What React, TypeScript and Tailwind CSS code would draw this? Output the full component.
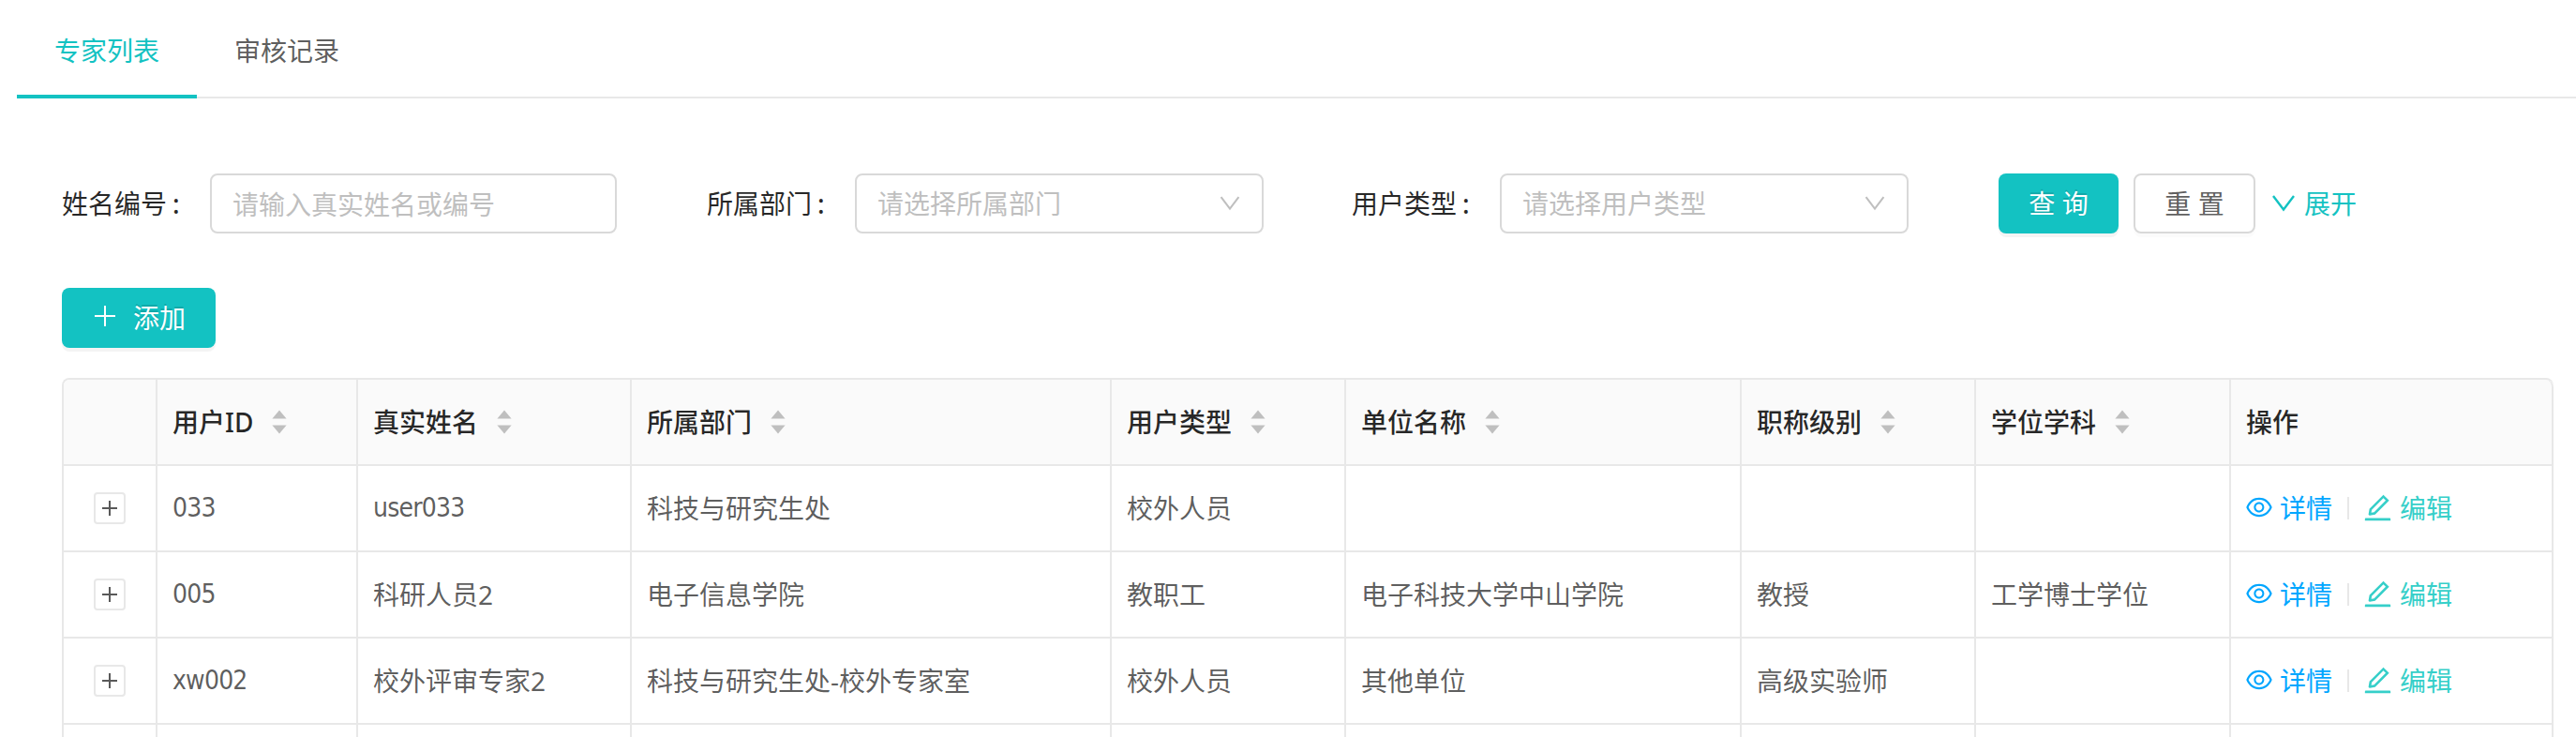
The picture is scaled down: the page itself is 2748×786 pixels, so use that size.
import React from 'react';
import { AiOutlineEdit, AiOutlineEye } from 'react-icons/ai';

interface Expert {
  id: string;
  name: string;
  department: string;
  userType: string;
  unit: string;
  title: string;
  degree: string;
}

const experts: Expert[] = [
  { id: '033', name: 'user033', department: '科技与研究生处', userType: '校外人员', unit: '', title: '', degree: '' },
  { id: '005', name: '科研人员2', department: '电子信息学院', userType: '教职工', unit: '电子科技大学中山学院', title: '教授', degree: '工学博士学位' },
  { id: 'xw002', name: '校外评审专家2', department: '科技与研究生处-校外专家室', userType: '校外人员', unit: '其他单位', title: '高级实验师', degree: '' },
];

const columns: { key: keyof Expert; label: string }[] = [
  { key: 'id', label: '用户ID' },
  { key: 'name', label: '真实姓名' },
  { key: 'department', label: '所属部门' },
  { key: 'userType', label: '用户类型' },
  { key: 'unit', label: '单位名称' },
  { key: 'title', label: '职称级别' },
  { key: 'degree', label: '学位学科' },
];

const gridCols = 'grid grid-cols-[100px_214px_292px_512px_250px_422px_250px_272px_344px]';
const cell = 'flex items-center border-r-2 border-b-2 border-[#e8e8e8] px-4';

// Latin-only values are set a little tighter than the Chinese ones
const latinOnly = /^[\w-]+$/;

const Sorter: React.FC = () => (
  <svg className="ml-5 h-[26px] w-4" viewBox="0 0 16 26" fill="#bfbfbf">
    <path d="M8 0.5L15.6 9.5H0.4z" />
    <path d="M8 25.5L0.4 16.5h15.2z" />
  </svg>
);

const ChevronDown: React.FC<{ className: string }> = ({ className }) => (
  <svg className={className} viewBox="0 0 28 28" fill="none" stroke="currentColor" strokeWidth={2.4}>
    <path d="M3 6L14 20.5L25 6" />
  </svg>
);

const Field: React.FC<{ label: string; children: React.ReactNode }> = ({ label, children }) => (
  <div className="flex w-[688px] items-center">
    <label className="w-[158px] text-black/85">
      {label}
      <span className="ml-1.5 font-medium">:</span>
    </label>
    {children}
  </div>
);

const SelectBox: React.FC<{ placeholder: string }> = ({ placeholder }) => (
  <div className="flex h-16 w-[436px] items-center justify-between rounded-lg border-2 border-[#d9d9d9] px-[22px] text-[#bfbfbf]">
    <span>{placeholder}</span>
    <ChevronDown className="h-6 w-6" />
  </div>
);

const ExpertTable: React.FC = () => (
  <div className="w-[2658px] rounded-t-lg border-t-2 border-l-2 border-[#e8e8e8]">
    {/* Header */}
    <div className={`${gridCols} h-[92px] font-medium text-black/85`}>
      <div className={`${cell} rounded-tl-md bg-[#fafafa]`} />
      {columns.map((col) => (
        <div key={col.key} className={`${cell} bg-[#fafafa]`}>
          {col.label}
          <Sorter />
        </div>
      ))}
      <div className={`${cell} rounded-tr-lg bg-[#fafafa]`}>操作</div>
    </div>

    {/* Rows */}
    {experts.map((row) => (
      <div key={row.id} className={`${gridCols} h-[92px]`}>
        <div className={`${cell} justify-center`}>
          <button className="flex h-[34px] w-[34px] items-center justify-center rounded border-2 border-[#e8e8e8]">
            <svg className="h-4 w-4" viewBox="0 0 16 16" stroke="#595959" strokeWidth={2}>
              <path d="M8 0v16M0 8h16" />
            </svg>
          </button>
        </div>
        {columns.map((col) => (
          <div key={col.key} className={cell}>
            <span className={latinOnly.test(row[col.key]) ? "font-['DejaVu_Sans_Condensed','Noto_Sans',sans-serif] tracking-[-0.8px]" : ''}>
              {row[col.key]}
            </span>
          </div>
        ))}
        <div className={cell}>
          <a className="flex items-center text-[#00a6ff]">
            <AiOutlineEye className="mr-1.5 -ml-0.5 h-8 w-8 -translate-y-px" />
            详情
          </a>
          <span className="mx-4 h-6 w-0.5 bg-[#e8e8e8]" />
          <a className="flex items-center text-[#36cfc9]">
            <AiOutlineEdit className="mr-1.5 -ml-[3px] h-[35px] w-[35px] -translate-y-px" />
            编辑
          </a>
        </div>
      </div>
    ))}

    {/* Next row, cut off by the viewport */}
    <div className={`${gridCols} h-[13px]`}>
      <div className="border-r-2 border-[#e8e8e8]" />
      {columns.map((col) => (
        <div key={col.key} className="border-r-2 border-[#e8e8e8]" />
      ))}
      <div className="border-r-2 border-[#e8e8e8]" />
    </div>
  </div>
);

const App: React.FC = () => {
  return (
    <div className="h-[786px] w-[2748px] overflow-hidden bg-white font-['Noto_Sans','Noto_Sans_CJK_SC',sans-serif] text-[28px] leading-[42px] text-black/65">
      {/* Tabs */}
      <div className="ml-[18px] flex h-[105px] border-b-2 border-[#e8e8e8]">
        <div className="-mb-0.5 border-b-4 border-[#13c2c2] px-10 pt-[33px] text-[#13c2c2]">专家列表</div>
        <div className="px-10 pt-[33px]">审核记录</div>
      </div>

      <div className="pt-20 pl-[66px]">
        {/* Search form */}
        <div className="flex items-center">
          <Field label="姓名编号">
            <input
              className="h-16 w-[434px] rounded-lg border-2 border-[#d9d9d9] px-[22px] pt-0.5 placeholder:text-[#bfbfbf]"
              placeholder="请输入真实姓名或编号"
            />
          </Field>
          <Field label="所属部门">
            <SelectBox placeholder="请选择所属部门" />
          </Field>
          <Field label="用户类型">
            <SelectBox placeholder="请选择用户类型" />
          </Field>
          <div className="ml-0.5 flex items-center">
            <button className="h-16 w-32 rounded-lg bg-[#13c2c2] text-white shadow-[0_4px_0_rgba(0,0,0,0.045)] [text-shadow:0_-2px_0_rgba(0,0,0,0.12)]">
              查 询
            </button>
            <button className="ml-4 h-16 w-[130px] rounded-lg border-2 border-[#d9d9d9] shadow-[0_4px_0_rgba(0,0,0,0.015)]">
              重 置
            </button>
            <a className="ml-4 flex items-center text-[#13c2c2]">
              <ChevronDown className="mr-2 h-7 w-7" />
              展开
            </a>
          </div>
        </div>

        <button className="mt-[58px] flex h-16 w-[164px] items-center rounded-lg bg-[#13c2c2] pl-8 text-white shadow-[0_4px_0_rgba(0,0,0,0.045)] [text-shadow:0_-2px_0_rgba(0,0,0,0.12)]">
          <svg className="mr-4 h-7 w-7 -translate-y-0.5" viewBox="0 0 28 28" stroke="currentColor" strokeWidth={2}>
            <path d="M14 3v22M3 14h22" />
          </svg>
          添加
        </button>

        <div className="mt-8">
          <ExpertTable />
        </div>
      </div>
    </div>
  );
};

export default App;
